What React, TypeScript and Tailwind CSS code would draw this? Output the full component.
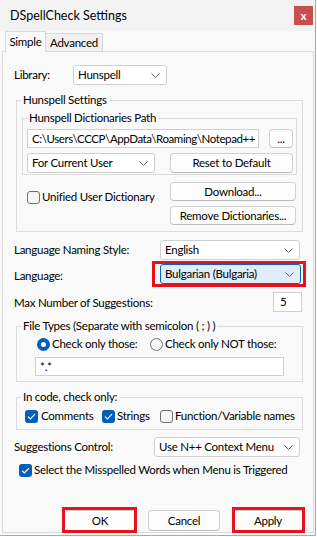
import type { ReactNode } from "react";

const font = "font-['Lato','Segoe_UI',sans-serif] text-[11.5px] tracking-[-0.25px] text-black";

function Chevron() {
  return (
    <svg width="9" height="5" viewBox="0 0 9 5" className="shrink-0">
      <path d="M0.5 0.5 L4.5 4.5 L8.5 0.5" fill="none" stroke="#606060" strokeWidth="1" />
    </svg>
  );
}

function Combo({ text, w, focused = false }: { text: string; w: string; focused?: boolean }) {
  return (
    <div
      className={`${w} flex h-[20px] items-center justify-between rounded-[3px] border pl-[4px] pr-[6px] leading-[16px] ${
        focused ? "border-[#0067c0] bg-[#e1ecf9]" : "border-[#d0d0d0] bg-white"
      }`}
    >
      <span className="whitespace-nowrap">{text}</span>
      <Chevron />
    </div>
  );
}

function Button({ children, w, h = "h-[19px]" }: { children: ReactNode; w: string; h?: string }) {
  return (
    <div
      className={`${w} ${h} flex shrink-0 items-center justify-center rounded-[4px] border border-[#d0d0d0] border-b-[#bcbcbc] bg-[#fdfdfd] leading-[16px] whitespace-nowrap`}
    >
      {children}
    </div>
  );
}

function Check({ on }: { on: boolean }) {
  return on ? (
    <span className="flex h-[13px] w-[13px] shrink-0 items-center justify-center rounded-[3px] bg-[#005fb8]">
      <svg width="9" height="7" viewBox="0 0 9 7">
        <path d="M1 3.6 L3.4 6 L8 1.2" fill="none" stroke="white" strokeWidth="1.2" />
      </svg>
    </span>
  ) : (
    <span className="h-[13px] w-[13px] shrink-0 rounded-[3px] border border-[#707070] bg-[#f6f6f6]" />
  );
}

function Radio({ on }: { on: boolean }) {
  return on ? (
    <span className="flex h-[13px] w-[13px] shrink-0 items-center justify-center rounded-full bg-[#005fb8]">
      <span className="h-[5px] w-[5px] rounded-full bg-white" />
    </span>
  ) : (
    <span className="h-[13px] w-[13px] shrink-0 rounded-full border border-[#707070] bg-[#f6f6f6]" />
  );
}

function Group({ title, className, children }: { title: string; className: string; children: ReactNode }) {
  return (
    <fieldset className={`${className} shrink-0 border border-[#dcdcdc]`}>
      <legend className="ml-[4px] px-[2px] leading-[16px] whitespace-nowrap">{title}</legend>
      {children}
    </fieldset>
  );
}

function Label({ children, w }: { children: ReactNode; w: string }) {
  return <span className={`${w} shrink-0 leading-[16px] whitespace-nowrap`}>{children}</span>;
}

export default function App() {
  return (
    <div className={`${font} h-[537px] w-[317px] bg-white`}>
      <div className="flex h-[536px] w-[316px] flex-col border-r border-b border-[#a8a8a8] bg-[#f9f9f9]">
        {/* title bar */}
        <div className="flex h-[31px] shrink-0 items-center justify-between bg-[#f3f3f3] pl-[10px] pr-[2px]">
          <span className="text-[12.5px] leading-[16px] tracking-normal">DSpellCheck Settings</span>
          <span className="flex h-[19px] w-[19px] items-center justify-center bg-[#c94f4f] text-[11px] leading-none font-bold text-white">
            x
          </span>
        </div>

        {/* tabs */}
        <div className="flex h-[20px] shrink-0 items-end pl-[5px]">
          <div className="relative z-10 -mb-px flex h-[21px] w-[41px] items-center justify-center border border-b-0 border-[#d9d9d9] bg-[#f9f9f9] pb-[1px] leading-[16px]">
            Simple
          </div>
          <div className="flex h-[18px] w-[57px] items-center justify-center border border-l-0 border-b-0 border-[#d9d9d9] bg-[#f0f0f0] leading-[16px]">
            Advanced
          </div>
        </div>

        {/* panel */}
        <div className="ml-[2px] flex h-[482px] w-[312px] shrink-0 flex-col border border-[#d9d9d9]">
          {/* library */}
          <div className="mt-[13px] flex h-[20px] items-center pl-[11px]">
            <Label w="w-[59px]">Library:</Label>
            <Combo text="Hunspell" w="w-[94px]" />
          </div>

          <Group title="Hunspell Settings" className="mt-[7px] ml-[13px] h-[140px] w-[287px]">
            <Group title="Hunspell Dictionaries Path" className="mt-[2px] ml-[5px] h-[65px] w-[275px]">
              <div className="mt-[3px] flex items-center pl-[4px]">
                <div className="flex h-[19px] w-[232px] items-center overflow-hidden border border-[#d0d0d0] bg-white pl-[4px] leading-[16px] tracking-[-0.4px] whitespace-nowrap">
                  C:\Users\CCCP\AppData\Roaming\Notepad++
                </div>
                <span className="ml-[10px]">
                  <Button w="w-[24px]">...</Button>
                </span>
              </div>
              <div className="mt-[5px] flex items-center pl-[4px]">
                <Combo text="For Current User" w="w-[128px]" />
                <span className="ml-[15px]">
                  <Button w="w-[123px]" h="h-[20px]">
                    Reset to Default
                  </Button>
                </span>
              </div>
            </Group>

            <div className="mt-[7px] flex pl-[10px]">
              <div className="mt-[7px] flex w-[143px] items-center gap-[2px] self-start">
                <Check on={false} />
                <span className="leading-[16px] whitespace-nowrap">Unified User Dictionary</span>
              </div>
              <div className="flex flex-col gap-[5px]">
                <Button w="w-[126px]">Download...</Button>
                <Button w="w-[126px]">Remove Dictionaries...</Button>
              </div>
            </div>
          </Group>

          <div className="mt-[8px] flex h-[20px] items-center pl-[11px]">
            <Label w="w-[146px]">Language Naming Style:</Label>
            <Combo text="English" w="w-[140px]" />
          </div>

          <div className="mt-[4px] flex h-[20px] items-center pl-[11px]">
            <Label w="w-[146px]">
              <span className="relative top-[2px]">Language:</span>
            </Label>
            <div className="relative">
              <Combo text="Bulgarian (Bulgaria)" w="w-[141px]" focused />
              <div className="pointer-events-none absolute -top-[3px] -right-[5px] -bottom-[3px] -left-[8px] border-[3px] border-[#e8121d]" />
            </div>
          </div>

          <div className="mt-[8px] flex h-[20px] items-center pl-[11px]">
            <Label w="w-[259px]">
              <span className="relative top-[1px]">Max Number of Suggestions:</span>
            </Label>
            <div className="flex h-[20px] w-[29px] items-center border border-[#d0d0d0] bg-white pl-[6px] leading-[16px]">5</div>
          </div>

          <Group title="File Types (Separate with semicolon ( ; ) )" className="mt-[6px] ml-[13px] h-[64px] w-[287px]">
            <div className="mt-[2px] flex h-[16px] items-center pl-[20px]">
              <div className="flex w-[113px] items-center gap-[2px]">
                <Radio on />
                <span className="leading-[16px] whitespace-nowrap">Check only those:</span>
              </div>
              <div className="flex items-center gap-[2px]">
                <Radio on={false} />
                <span className="leading-[16px] whitespace-nowrap">Check only NOT those:</span>
              </div>
            </div>
            <div className="mt-[5px] ml-[18px] flex h-[19px] w-[249px] items-center border border-[#d0d0d0] bg-white pl-[4px] leading-[16px]">
              *.*
            </div>
          </Group>

          <Group title="In code, check only:" className="mt-[7px] ml-[13px] h-[41px] w-[287px]">
            <div className="mt-[3px] flex h-[16px] items-center pl-[8px]">
              <div className="flex w-[77px] items-center gap-[3px]">
                <Check on />
                <span className="leading-[16px]">Comments</span>
              </div>
              <div className="flex w-[58px] items-center gap-[2px]">
                <Check on />
                <span className="leading-[16px]">Strings</span>
              </div>
              <div className="flex items-center gap-[2px]">
                <Check on={false} />
                <span className="leading-[16px] whitespace-nowrap">Function/Variable names</span>
              </div>
            </div>
          </Group>

          <div className="mt-[7px] flex h-[20px] items-center pl-[11px]">
            <Label w="w-[140px]">Suggestions Control:</Label>
            <Combo text="Use N++ Context Menu" w="w-[146px]" />
          </div>

          <div className="mt-[5px] flex h-[16px] items-center gap-[2px] pl-[16px]">
            <Check on />
            <span className="leading-[16px] whitespace-nowrap">Select the Misspelled Words when Menu is Triggered</span>
          </div>

          <div className="mt-[32px] flex pl-[61px]">
            <div className="relative">
              <Button w="w-[72px]" h="h-[21px]">
                OK
              </Button>
              <div className="pointer-events-none absolute -top-[3px] -right-[1px] -bottom-[2px] -left-[2px] border-[3px] border-[#e8121d]" />
            </div>
            <span className="ml-[12px]">
              <Button w="w-[72px]" h="h-[21px]">
                Cancel
              </Button>
            </span>
            <div className="relative ml-[12px]">
              <Button w="w-[72px]" h="h-[21px]">
                Apply
              </Button>
              <div className="pointer-events-none absolute -top-[3px] -right-[1px] -bottom-[2px] -left-[0px] border-[3px] border-[#e8121d]" />
            </div>
          </div>
        </div>
      </div>
    </div>
  );
}
